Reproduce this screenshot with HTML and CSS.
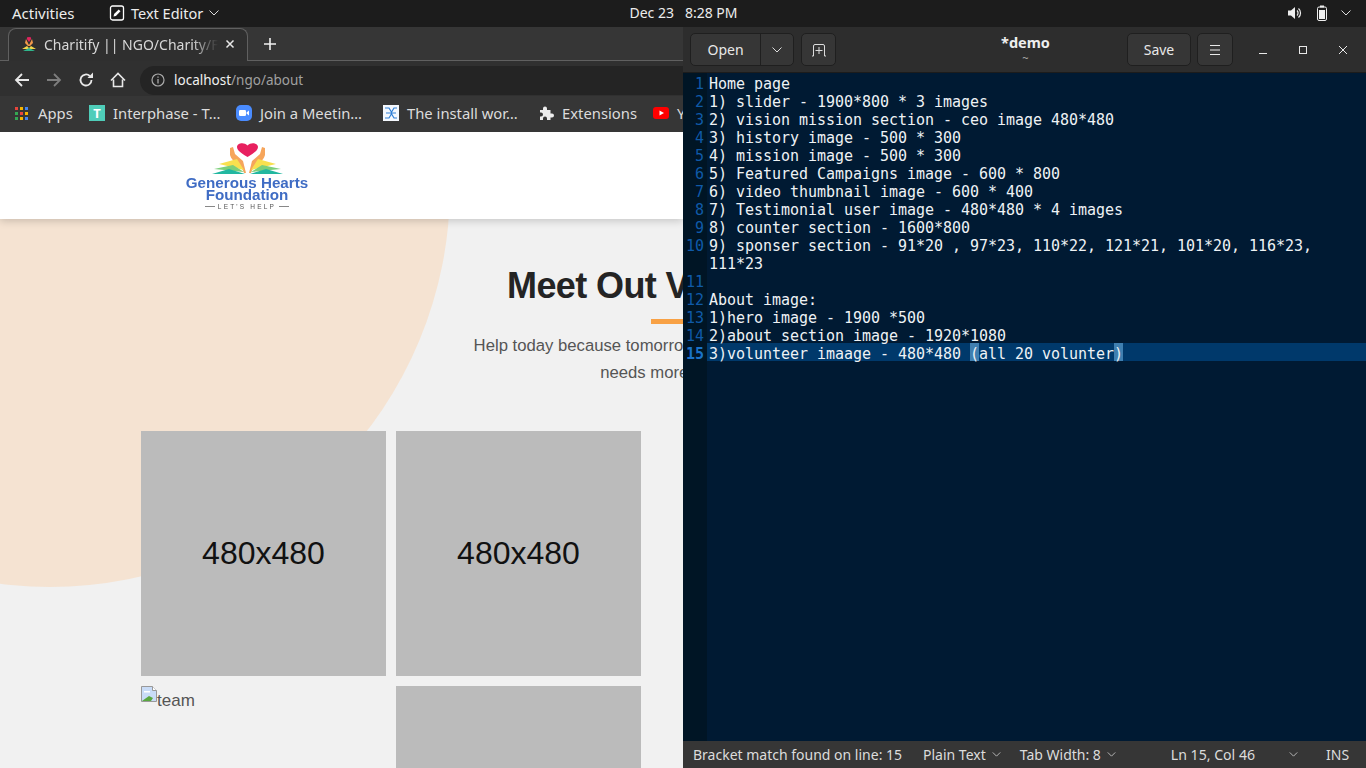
FILE: index.html
```html
<!DOCTYPE html>
<html lang="en">
<head>
  <meta charset="UTF-8" />
  <title>Charitify || NGO/Charity</title>
  <link rel="stylesheet" href="styles.css">
</head>
<body>
  <div class="topbar">
    <div class="topbar-left">
      <span class="activities">Activities</span>
      <span class="app-menu">
        <svg width="16" height="16" viewBox="0 0 16 16"><rect x="1.500" y="1" width="13" height="14" rx="2" fill="none" stroke="#fff" stroke-width="1.300"/><path d="M4.500 11.500l.6-2.400 4.600-4.600 1.800 1.800-4.600 4.600z" fill="#fff"/></svg>
        Text Editor
        <svg class="chev" width="10" height="6" viewBox="0 0 10 6"><path d="M.5.5L5 5 9.500.5" fill="none" stroke="#ddd" stroke-width="1"/></svg>
      </span>
    </div>
    <div class="clock"><span>Dec 23</span><span>8:28 PM</span></div>
    <div class="tray">
      <svg width="16" height="16" viewBox="0 0 16 16"><path d="M1 5.500h3L8 2v12L4 10.500H1z" fill="#eee"/><path d="M10 5.500a3.500 3.500 0 0 1 0 5M11.500 3.500a6 6 0 0 1 0 9" fill="none" stroke="#eee" stroke-width="1.200"/></svg>
      <svg width="12" height="16" viewBox="0 0 12 16"><rect x="4" y="0.500" width="4" height="2" fill="#eee"/><rect x="1.500" y="2" width="9" height="13.500" rx="1.500" fill="none" stroke="#eee"/><rect x="3" y="5" width="6" height="9" fill="#eee"/></svg>
      <svg width="10" height="6" viewBox="0 0 10 6"><path d="M.5.5L5 5 9.500.5" fill="none" stroke="#ddd" stroke-width="1"/></svg>
    </div>
  </div>

  <div class="desktop">
    <section class="browser">
      <div class="tabstrip">
        <div class="tab">
          <svg width="16" height="16" viewBox="0 0 16 16"><path d="M8 1.500c1-1 3 0 1.800 2L8 6 6.200 3.500C5 1.500 7 .5 8 1.500z" fill="#e0245e"/><path d="M5 3l3 6 3-6 1 4-3 3H7L4 7z" fill="#f2994a"/><path d="M1 13l5-3 2 2 2-2 5 3z" fill="#f2d64b"/><path d="M2 15l6-3 6 3z" fill="#2fb58c"/></svg>
          <span class="tab-title">Charitify || NGO/Charity/Fundraising</span>
          <svg class="tab-close" width="10" height="10" viewBox="0 0 10 10"><path d="M1.500 1.500l7 7M8.500 1.500l-7 7" stroke="#e8e8e8" stroke-width="1.500"/></svg>
        </div>
        <svg class="new-tab" width="12" height="12" viewBox="0 0 12 12"><path d="M6 0v12M0 6h12" stroke="#f1f1f1" stroke-width="1.600"/></svg>
      </div>

      <div class="toolbar">
        <svg width="16" height="16" viewBox="0 0 16 16"><path d="M15 8H2M8 2L2 8l6 6" fill="none" stroke="#e8e8e8" stroke-width="1.800"/></svg>
        <svg width="16" height="16" viewBox="0 0 16 16"><path d="M1 8h13M8 2l6 6-6 6" fill="none" stroke="#7d7d7d" stroke-width="1.800"/></svg>
        <svg width="16" height="16" viewBox="0 0 16 16"><path d="M13.500 8A5.500 5.500 0 1 1 11.800 4" fill="none" stroke="#e8e8e8" stroke-width="1.800"/><path d="M9.500 6H15V.5z" fill="#e8e8e8"/></svg>
        <svg width="16" height="16" viewBox="0 0 16 16"><path d="M1 8.500L8 1.500l7 7M3.500 7.500v7h9v-7" fill="none" stroke="#e8e8e8" stroke-width="1.600"/></svg>
        <div class="omnibox">
          <svg width="14" height="14" viewBox="0 0 14 14"><circle cx="7" cy="7" r="6" fill="none" stroke="#aaa" stroke-width="1.200"/><path d="M7 6v4.500M7 3.500v1.300" stroke="#aaa" stroke-width="1.300"/></svg>
          <span class="url"><b>localhost</b>/ngo/about</span>
        </div>
      </div>

      <div class="bookmarks">
        <span class="bm">
          <span class="apps-icon"><i></i><i></i><i></i><i></i><i></i><i></i><i></i><i></i><i></i></span>
          Apps
        </span>
        <span class="bm">
          <span class="bm-t">T</span>
          Interphase - T…
        </span>
        <span class="bm">
          <svg width="16" height="16" viewBox="0 0 16 16"><rect width="16" height="16" rx="5" fill="#4a8cff"/><rect x="3" y="5" width="7" height="6" rx="1.200" fill="#fff"/><path d="M10.500 7.500L13 5.500v5l-2.500-2z" fill="#fff"/></svg>
          Join a Meetin…
        </span>
        <span class="bm">
          <svg width="16" height="16" viewBox="0 0 16 16"><rect width="16" height="16" fill="#f4f8fd"/><path d="M2 3h4l3 5-3 5H2M14 3h-3L8 8l3 5h3M3 8h10" fill="none" stroke="#2f7fd6" stroke-width="1.200"/></svg>
          The install wor…
        </span>
        <span class="bm">
          <svg width="16" height="16" viewBox="0 0 16 16"><path d="M2 5h3V3.500a2 2 0 0 1 4 0V5h3.500v3.500H14a2 2 0 0 1 0 4h-1.500V15H9v-1.500a2 2 0 0 0-4 0V15H2v-3.500h1a2 2 0 0 0 0-4H2z" fill="#ececec"/></svg>
          Extensions
        </span>
        <span class="bm">
          <svg width="16" height="12" viewBox="0 0 16 12"><rect width="16" height="12" rx="3" fill="#f00"/><path d="M6.500 3.500v5L11 6z" fill="#fff"/></svg>
          YouTube
        </span>
      </div>

      <div class="page">
        <div class="blob"></div>
        <header class="site-header">
          <div class="logo">
            <svg width="71" height="32" viewBox="0 0 71 32">
              <path d="M35.500 14c-4-2.500-10.500-6-10.500-10 0-4 7-5.500 10.500-1.500C39-1.500 46 0 46 4c0 4-6.500 7.500-10.500 10z" fill="#e8205f"/>
              <g id="wing">
                <path d="M18 5l3-1 2 7 8 7 3 12h-2c-2-8-12-10-14-18z" fill="#f6a55b"/>
                <path d="M7 21l18-5 7 11z" fill="#f8e04f"/>
                <path d="M2 26l19-4 11 7z" fill="#7ccf7a"/>
                <path d="M0 31l17-5 16 5z" fill="#22b7a0"/>
              </g>
              <use href="#wing" transform="matrix(-1 0 0 1 71 0)"/>
            </svg>
            <div class="logo-name">Generous Hearts<br>Foundation</div>
            <div class="logo-tag"><i></i>LET'S HELP<i></i></div>
          </div>
        </header>

        <section class="team">
          <div class="team-head">
            <h2>Meet Out Volunteers</h2>
            <div class="rule"></div>
            <p>Help today because tomorrow you may be the one who.<br>needs more help now</p>
          </div>
          <div class="team-grid">
            <div class="ph">480x480</div>
            <div class="ph">480x480</div>
            <div class="broken">
              <svg width="16" height="16" viewBox="0 0 16 16"><path d="M.5.500h11l4 4v11H.5z" fill="#c9dcf7" stroke="#999"/><path d="M11.500.500v4h4" fill="#fff" stroke="#999"/><path d="M1 15l7-5 4 2-2 3z" fill="#5aa83f"/><path d="M3 5h6v1.500H3z" fill="#fff"/></svg>team
            </div>
            <div class="ph">480x480</div>
          </div>
        </section>
      </div>
    </section>

    <section class="editor">
      <div class="headerbar">
        <div class="open-group">
          <span class="open-btn">Open</span>
          <span class="open-arrow"><svg width="10" height="6" viewBox="0 0 10 6"><path d="M.5.5L5 5 9.500.5" fill="none" stroke="#ddd"/></svg></span>
        </div>
        <span class="icon-btn">
          <svg width="16" height="16" viewBox="0 0 16 16"><path d="M2.500 14V4a1.500 1.500 0 0 1 1.500-1.500h8A1.500 1.500 0 0 1 13.500 4v10M1 14h1.500M13.500 14H15" fill="none" stroke="#ddd"/><path d="M8 5v7M4.500 8.500h7" stroke="#ddd"/></svg>
        </span>
        <div class="doc-title"><strong>*demo</strong><small>~</small></div>
        <span class="save-btn">Save</span>
        <span class="icon-btn menu-btn">
          <svg width="12" height="10" viewBox="0 0 12 10"><path d="M1 .5h10M1 5h10M1 9.500h10" stroke="#e8e8e8"/></svg>
        </span>
        <div class="wm-btns">
          <svg width="10" height="10" viewBox="0 0 10 10"><path d="M1 8.500h8" stroke="#e8e8e8" stroke-width="1"/></svg>
          <svg width="10" height="10" viewBox="0 0 10 10"><rect x="1.500" y="1.500" width="7" height="7" fill="none" stroke="#e8e8e8"/></svg>
          <svg width="10" height="10" viewBox="0 0 10 10"><path d="M1 1l8 8M9 1l-8 8" stroke="#e8e8e8" stroke-width="1"/></svg>
        </div>
      </div>

      <div class="code">
        <div class="gutter">
          <span>1</span><span>2</span><span>3</span><span>4</span><span>5</span><span>6</span><span>7</span><span>8</span><span>9</span><span>10</span><span class="wrapped">&nbsp;</span><span>11</span><span>12</span><span>13</span><span>14</span><span class="current">15</span>
        </div>
        <div class="lines">
          <div>Home page</div>
          <div>1) slider - 1900*800 * 3 images</div>
          <div>2) vision mission section - ceo image 480*480</div>
          <div>3) history image - 500 * 300</div>
          <div>4) mission image - 500 * 300</div>
          <div>5) Featured Campaigns image - 600 * 800</div>
          <div>6) video thumbnail image - 600 * 400</div>
          <div>7) Testimonial user image - 480*480 * 4 images</div>
          <div>8) counter section - 1600*800</div>
          <div>9) sponser section - 91*20 , 97*23, 110*22, 121*21, 101*20, 116*23,</div>
          <div>111*23</div>
          <div>&nbsp;</div>
          <div>About image:</div>
          <div>1)hero image - 1900 *500</div>
          <div>2)about section image - 1920*1080</div>
          <div class="current-line">3)volunteer imaage - 480*480 <mark>(</mark>all 20 volunter<mark>)</mark></div>
        </div>
      </div>

      <div class="statusbar">
        <span class="status-msg">Bracket match found on line: 15</span>
        <span class="status-item plain">Plain Text <svg width="9" height="5" viewBox="0 0 10 6"><path d="M.5.5L5 5 9.500.5" fill="none" stroke="#ccc"/></svg></span>
        <span class="status-item tabw">Tab Width: 8 <svg width="9" height="5" viewBox="0 0 10 6"><path d="M.5.5L5 5 9.500.5" fill="none" stroke="#ccc"/></svg></span>
        <span class="status-item pos">Ln 15, Col 46</span>
        <span class="status-item posarrow"><svg width="9" height="5" viewBox="0 0 10 6"><path d="M.5.5L5 5 9.500.5" fill="none" stroke="#ccc"/></svg></span>
        <span class="status-item ins">INS</span>
      </div>
    </section>
  </div>
</body>
</html>
```

FILE: styles.css
```css
html, body {
  margin: 0;
  height: 100%;
  overflow: hidden;
}
body {
  width: 1366px;
  height: 768px;
  display: flex;
  flex-direction: column;
  font-family: "Noto Sans", sans-serif;
  background: #000;
}
svg { display: block; flex: none; }

/* gnome top bar */
.topbar {
  height: 27px;
  flex: none;
  box-sizing: border-box;
  background: #1c1c1c;
  color: #ececec;
  font-size: 14px;
  display: grid;
  grid-template-columns: 1fr auto 1fr;
  align-items: center;
  padding: 0 12px 2px;
}
.topbar-left { display: flex; align-items: center; }
.activities { width: 97px; font-size: 15px; }
.app-menu { display: flex; align-items: center; gap: 6px; font-size: 14.500px; }
.clock { display: flex; gap: 11px; margin-left: 1px; }
.tray { display: flex; align-items: center; justify-content: flex-end; gap: 13px; padding-right: 3px; }

.desktop {
  flex: 1;
  display: flex;
  min-height: 0;
}

/* chrome window */
.browser {
  width: 683px;
  flex: none;
  display: flex;
  flex-direction: column;
  overflow: hidden;
}
.tabstrip {
  height: 34px;
  flex: none;
  box-sizing: border-box;
  background: #363636;
  display: flex;
  align-items: flex-end;
  border-bottom: 1px solid #606060;
}
.tab {
  width: 240px;
  height: 33px;
  margin-left: 8px;
  margin-bottom: -1px;
  box-sizing: border-box;
  background: #2f2f2f;
  border: 1px solid #606060;
  border-bottom: none;
  border-radius: 8px 8px 0 0;
  display: flex;
  align-items: center;
  padding: 0 12px 2px 12px;
  gap: 7px;
  color: #d8d8d8;
  font-size: 14px;
}
.tab-title {
  flex: 1;
  overflow: hidden;
  white-space: nowrap;
  -webkit-mask-image: linear-gradient(to right, #000 85%, transparent);
  mask-image: linear-gradient(to right, #000 85%, transparent);
}
.new-tab { margin: 0 0 10px 16px; }
.toolbar {
  height: 35px;
  flex: none;
  box-sizing: border-box;
  background: #303030;
  display: flex;
  align-items: center;
  padding: 3px 0 0 14px;
  gap: 16px;
}
.omnibox {
  flex: 1;
  height: 29px;
  margin-left: -2px;
  background: #242424;
  border-radius: 15px 0 0 15px;
  display: flex;
  align-items: center;
  gap: 9px;
  padding-left: 11px;
  font-size: 13.500px;
  color: #a0a0a0;
}
.url b { font-weight: 400; color: #f0f0f0; }
.bookmarks {
  height: 36px;
  flex: none;
  box-sizing: border-box;
  padding: 0 0 2px 15px;
  background: #363636;
  display: grid;
  grid-template-columns: 74px 147px 147px 155px 115px auto;
  align-items: center;
  color: #dcdcdc;
  font-size: 14.800px;
  white-space: nowrap;
}
.bm { display: flex; align-items: center; gap: 8px; }
.apps-icon {
  display: grid;
  grid-template-columns: repeat(3, 3px);
  gap: 2px;
  width: 13px;
  margin-right: 2px;
}
.apps-icon i { height: 3px; background: #e8453c; }
.apps-icon i:nth-child(2) { background: #f4b400; }
.apps-icon i:nth-child(3) { background: #4285f4; }
.apps-icon i:nth-child(4) { background: #34a853; }
.apps-icon i:nth-child(6) { background: #f4b400; }
.apps-icon i:nth-child(7) { background: #34a853; }
.apps-icon i:nth-child(8) { background: #f4b400; }
.apps-icon i:nth-child(9) { background: #4285f4; }
.bm-t {
  width: 16px;
  height: 16px;
  background: #4fcdb9;
  color: #fff;
  font: bold 13px/16px "Noto Sans", sans-serif;
  text-align: center;
}

/* website inside the browser */
.page {
  flex: 1;
  position: relative;
  background: #f1f1f1;
  overflow: hidden;
  font-family: "Liberation Sans", Arial, sans-serif;
}
.blob {
  position: absolute;
  left: -350px;
  top: -345px;
  width: 800px;
  height: 800px;
  border-radius: 50%;
  background: #f5e3d2;
}
.site-header {
  position: relative;
  height: 87px;
  box-sizing: border-box;
  background: #fff;
  box-shadow: 0 2px 8px rgba(0, 0, 0, .18);
  padding: 11px 0 0 185px;
}
.logo {
  width: 124px;
  display: flex;
  flex-direction: column;
  align-items: center;
  filter: blur(.3px);
}
.logo-name {
  margin-top: 2px;
  color: #3f6cc4;
  font-size: 15.200px;
  font-weight: bold;
  line-height: 12px;
  text-align: center;
  white-space: nowrap;
}
.logo-tag {
  display: flex;
  align-items: center;
  gap: 3px;
  margin-top: 2px;
  color: #555;
  font-size: 6.500px;
  letter-spacing: 2.200px;
  white-space: nowrap;
}
.logo-tag i { width: 10px; height: 1px; background: #888; }
.team { position: relative; }
.team-head {
  width: 1366px;
  text-align: center;
  padding-top: 47px;
}
.team-head h2 {
  margin: 0;
  padding-right: 16px;
  font-size: 36px;
  line-height: 40px;
  letter-spacing: -.6px;
  color: #242424;
  white-space: nowrap;
}
.rule {
  width: 64px;
  height: 5px;
  margin: 13px auto 0;
  background: #f8a145;
}
.team-head p {
  margin: 8px 0 0;
  padding-right: 6px;
  color: #555;
  font-size: 16.700px;
  line-height: 27px;
  white-space: nowrap;
}
.team-grid {
  display: grid;
  grid-template-columns: repeat(2, 245px);
  grid-auto-rows: 245px;
  gap: 10px;
  padding: 45px 0 0 141px;
}
.ph {
  background: #bbb;
  color: #111;
  font-size: 32px;
  display: flex;
  align-items: center;
  justify-content: center;
}
.broken {
  display: flex;
  align-items: flex-start;
  color: #555;
  font-size: 17px;
  line-height: 30px;
}

/* gedit window */
.editor {
  flex: 1;
  display: flex;
  flex-direction: column;
  min-width: 0;
  background: #001a33;
  color: #eef2f5;
}
.headerbar {
  height: 46px;
  flex: none;
  box-sizing: border-box;
  background: #2d2d2d;
  border-bottom: 1px solid #1c1c1c;
  display: flex;
  align-items: center;
  padding-left: 7px;
  font-size: 14px;
}
.open-group, .icon-btn, .save-btn {
  height: 33px;
  flex: none;
  box-sizing: border-box;
  background: #363636;
  border: 1px solid #1f1f1f;
  border-radius: 5px;
  color: #e8e8e8;
}
.open-group { display: flex; width: 104px; }
.open-btn {
  width: 69px;
  border-right: 1px solid #1f1f1f;
  text-align: center;
  line-height: 31px;
}
.open-arrow { flex: 1; display: flex; align-items: center; justify-content: center; }
.icon-btn {
  width: 35px;
  margin-left: 7px;
  display: flex;
  align-items: center;
  justify-content: center;
}
.doc-title {
  flex: 1;
  display: flex;
  flex-direction: column;
  align-items: center;
  color: #eee;
  line-height: 15px;
  padding-left: 88px;
  margin-top: -2px;
}
.doc-title strong { font-size: 14.500px; }
.doc-title small { font-size: 11px; line-height: 11px; color: #aaa; margin-top: 2px; }
.save-btn { width: 64px; text-align: center; line-height: 31px; }
.menu-btn { width: 36px; margin-left: 6px; }
.wm-btns {
  width: 133px;
  flex: none;
  box-sizing: border-box;
  display: flex;
  align-items: center;
  gap: 30px;
  padding-left: 25px;
}

/* the text sits a little low in each 18px row, as gtksourceview draws it */
.code {
  flex: 1;
  display: flex;
  min-height: 0;
  font-family: "DejaVu Sans Mono", monospace;
  font-size: 15px;
  line-height: 22px;
  letter-spacing: -.03px;
}
.gutter {
  width: 24px;
  flex: none;
  box-sizing: border-box;
  background: #001525;
  color: #0f5aa8;
  text-align: right;
  padding-right: 3px;
}
.gutter span { display: block; height: 18px; }
.gutter .current { color: #1a73c9; font-weight: bold; }
.lines { flex: 1; min-width: 0; }
.lines div { height: 18px; padding-left: 2px; white-space: pre; }
.lines .current-line { background: #00396b; }
mark {
  display: inline-block;
  height: 18px;
  vertical-align: top;
  background: #3f7fb0;
  color: #eef2f5;
}

.statusbar {
  height: 27px;
  flex: none;
  box-sizing: border-box;
  padding-bottom: 1px;
  background: #363636;
  color: #dcdcdc;
  font-size: 14px;
  display: flex;
  align-items: center;
  white-space: nowrap;
}
.status-msg { width: 240px; padding-left: 10px; box-sizing: border-box; }
.status-item { display: flex; align-items: center; gap: 6px; }
.tabw { margin-left: 19px; }
.pos { margin-left: 55px; font-size: 14.100px; }
.posarrow { margin-left: 34px; }
.ins { margin-left: 28px; }
```
